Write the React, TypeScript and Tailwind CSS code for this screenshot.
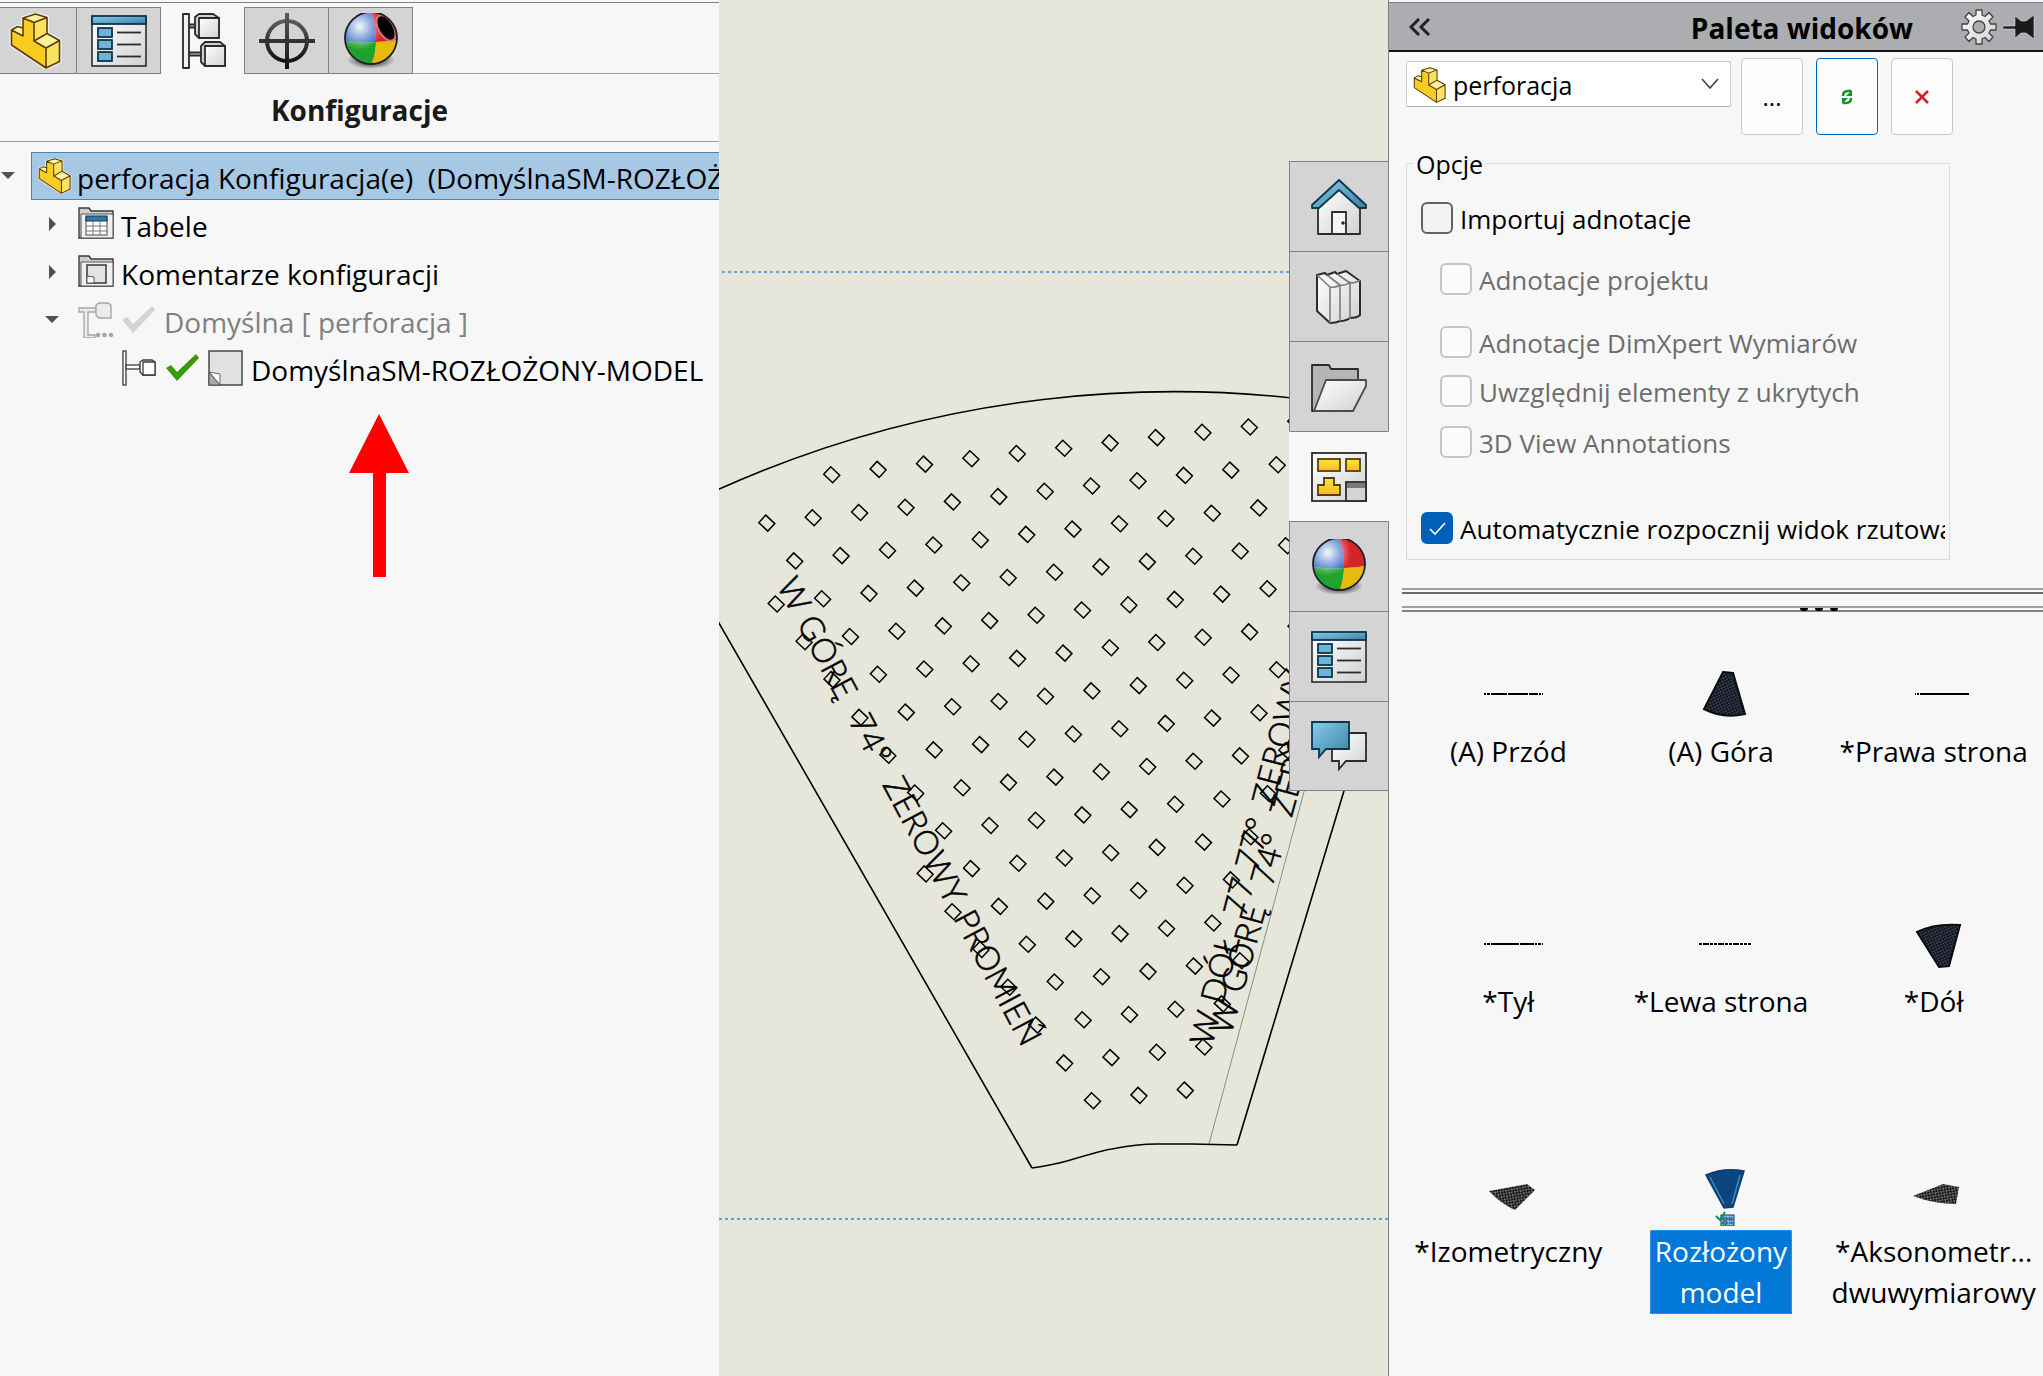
import React, { useState } from 'react';
import clsx from 'clsx';

// ---------------------------------------------------------------- icons

const Gradients: React.FC = () => (
    <svg className="absolute w-0 h-0" aria-hidden="true">
        <defs>
            <linearGradient id="g-blue" x1="0" y1="0" x2="1" y2="1">
                <stop offset="0" stopColor="#86cdee" />
                <stop offset="1" stopColor="#3f7f9f" />
            </linearGradient>
            <linearGradient id="g-grey" x1="0" y1="0" x2="1" y2="1">
                <stop offset="0" stopColor="#ffffff" />
                <stop offset="1" stopColor="#d0d2d2" />
            </linearGradient>
            <linearGradient id="g-dark" x1="0" y1="0" x2="0" y2="1">
                <stop offset="0" stopColor="#5a5a5a" />
                <stop offset="1" stopColor="#111111" />
            </linearGradient>
            <linearGradient id="g-gold" x1="0" y1="0" x2="0" y2="1">
                <stop offset="0" stopColor="#fde24a" />
                <stop offset="1" stopColor="#f3bf14" />
            </linearGradient>
            <radialGradient id="g-shine" cx="0.28" cy="0.28" r="0.45">
                <stop offset="0" stopColor="#ffffff" stopOpacity="0.95" />
                <stop offset="1" stopColor="#ffffff" stopOpacity="0" />
            </radialGradient>
            <radialGradient id="g-shadow">
                <stop offset="0.4" stopColor="#000000" stopOpacity="0.6" />
                <stop offset="1" stopColor="#000000" stopOpacity="0" />
            </radialGradient>
            <pattern id="p-mesh" width="4" height="4" patternUnits="userSpaceOnUse" patternTransform="rotate(20)">
                <rect width="4" height="4" fill="#0d1016" />
                <path d="M1 0v2M3 2v2" stroke="#5d6b86" strokeWidth="1" />
            </pattern>
            <pattern id="p-grain" width="4" height="4" patternUnits="userSpaceOnUse" patternTransform="rotate(35)">
                <rect width="4" height="4" fill="#15161a" />
                <path d="M0 1h2M2 3h1.500" stroke="#c4c4be" strokeWidth="1" />
            </pattern>
            <pattern id="p-bluemesh" width="3" height="3" patternUnits="userSpaceOnUse" patternTransform="rotate(45)">
                <rect width="3" height="3" fill="#0a4a86" />
                <path d="M0 1h3" stroke="#0b3a6a" strokeWidth="1" />
            </pattern>
        </defs>
    </svg>
);

const PartIcon: React.FC<{ className?: string }> = ({ className }) => (
    <svg className={className} viewBox="0 0 56 56" strokeLinejoin="round">
        <path d="M15 5 27.500 1 39 4.500v16l12.500 7v21L38 55 3.500 32V17l6-3.500L15 15z" fill="none" stroke="#fff" strokeOpacity="0.7" strokeWidth="4" />
        <path d="M15 5 27.500 1 39 4.500v16l12.500 7v21L38 55 3.500 32V17l6-3.500L15 15z" fill="#f8cd22" />
        <path d="M15 5 27.500 1 39 4.500 26 9.500zM26 28l13-7.500 12.500 7L38 35zM3.500 17l6-3.500L15 15v8z" fill="#fdf0a0" />
        <path d="M26 9.500l13-5v16L26 28zM38 35l13.500-7.500v21L38 55z" fill="#fae262" />
        <path d="M15 5 27.500 1 39 4.500v16l12.500 7v21L38 55 3.500 32V17l6-3.500L15 15zM15 5l11 4.500 13-5M26 9.500V28l12 7 13.500-7.500M26 28l13-7.500M38 35v20M15 15v8L3.500 17" fill="none" stroke="#5a3d05" strokeWidth="1.600" />
    </svg>
);

const ListIcon: React.FC = () => (
    <svg className="w-14 h-14" viewBox="0 0 56 56">
        <rect x="1" y="4" width="54" height="49" fill="url(#g-grey)" stroke="#2b2b2b" strokeWidth="1.600" />
        <rect x="1" y="3" width="54" height="8" fill="url(#g-blue)" stroke="#0b3650" strokeWidth="1.800" />
        {[15, 27, 39].map(y => (
            <g key={y}>
                <rect x="7" y={y} width="14" height="9" fill="#6db4d8" stroke="#0b3650" strokeWidth="1.800" />
                <path d={`M26 ${y + 4.5}h24`} stroke="#2b2b2b" strokeWidth="1.800" />
            </g>
        ))}
    </svg>
);

const ConfigIcon: React.FC = () => (
    <svg className="w-14 h-14" viewBox="0 0 56 56" stroke="#2b2b2b" strokeWidth="1.800" strokeLinejoin="round">
        <path d="M14 11.500h10v3H14zM14 39.500h14v3H14z" fill="#d8d8d8" />
        <rect x="8" y="1" width="6" height="54" fill="#f2f2f2" />
        <path d="M20 4l4-3h14l6 4v20H24l-4-4z" fill="#cfd1d2" />
        <rect x="24" y="5" width="20" height="20" fill="url(#g-grey)" />
        <path d="M26 33l4-4h15l5 4v20H30l-4-4z" fill="#cfd1d2" />
        <rect x="30" y="33" width="20" height="20" fill="url(#g-grey)" />
    </svg>
);

const TargetIcon: React.FC = () => (
    <svg className="w-14 h-14" viewBox="0 0 56 56" fill="none">
        <circle cx="28" cy="28" r="20" stroke="url(#g-dark)" strokeWidth="4" />
        <rect x="26" y="0" width="4" height="56" fill="url(#g-dark)" />
        <rect x="0" y="26" width="56" height="4" fill="#333" />
    </svg>
);

const BallIcon: React.FC<{ hollow?: boolean }> = ({ hollow }) => (
    <svg className="w-14 h-14" viewBox="0 0 56 56">
        <ellipse cx="28" cy="47" rx="24" ry="9" fill="url(#g-shadow)" />
        <clipPath id="ball-clip"><circle cx="28" cy="25" r="26" /></clipPath>
        <g clipPath="url(#ball-clip)">
            <path d="M0-2h28q5 14 5 31Q14 31 0 27z" fill="#2a62c4" />
            <path d="M28-2q5 14 5 31 14 0 25-3V-2z" fill="#d8222a" />
            <path d="M0 27q14 4 33 2 0 12-6 25H0z" fill="#1fa32c" />
            <path d="M33 29q14 0 25-3v28H27q6-13 6-25z" fill="#e8b90e" />
            <circle cx="28" cy="25" r="26" fill="url(#g-shine)" />
            {hollow && <ellipse cx="43" cy="15" rx="7.500" ry="14" transform="rotate(-30 43 15)" fill="#000" stroke="#e8707a" strokeWidth="2" />}
        </g>
        <circle cx="28" cy="25" r="26" fill="none" stroke="#1d1d2b" strokeWidth="1.800" />
    </svg>
);

const HomeIcon: React.FC = () => (
    <svg className="w-14 h-14" viewBox="0 0 56 56" strokeLinejoin="round">
        <path d="M7 22 28 8l21 14v33H7z" fill="url(#g-grey)" stroke="#2b2b2b" strokeWidth="1.800" />
        <path d="M1 26 28 1l27 25v3h-7L28 11 8 29H1z" fill="url(#g-blue)" stroke="#0b3650" strokeWidth="1.800" />
        <rect x="21" y="33" width="14" height="22" fill="#f4f4f4" stroke="#2b2b2b" strokeWidth="1.800" />
        <circle cx="32" cy="44" r="1.800" fill="#2b2b2b" />
    </svg>
);

const BooksIcon: React.FC = () => (
    <svg className="w-14 h-14" viewBox="0 0 56 56" strokeLinejoin="round">
        <path d="M6 6l8-2 2 2 8-3 2 2 9-3 14 10v34q-3 3-10 3-4 3-10 3-4 2-10 2L6 42z" fill="url(#g-grey)" stroke="#2b2b2b" strokeWidth="2" />
        <path d="M6 6l13 12v36M19 18q6 1 10-2v36M29 16q6 1 10-3v37M39 14q6 0 10-3M16 6l13 10M26 5l13 9" fill="none" stroke="#7c7c7c" strokeWidth="1.600" />
    </svg>
);

const FolderIcon: React.FC = () => (
    <svg className="w-14 h-14" viewBox="0 0 56 56" strokeLinejoin="round">
        <path d="M1 52V6h17l2 4h27v11L42 52z" fill="#b5b5b5" stroke="#2b2b2b" strokeWidth="1.800" />
        <path d="M3 52 15 21h40v6L42 52z" fill="url(#g-grey)" stroke="#4a4a4a" strokeWidth="1.800" />
    </svg>
);

const PaletteIcon: React.FC = () => (
    <svg className="w-14 h-14" viewBox="0 0 56 56">
        <rect x="1" y="4" width="54" height="48" fill="url(#g-grey)" stroke="#2b2b2b" strokeWidth="1.800" />
        <g fill="url(#g-gold)" stroke="#5a3d05" strokeWidth="1.800">
            <rect x="7" y="10" width="22" height="12" />
            <rect x="35" y="10" width="14" height="12" />
            <path d="M7 46V36h6v-7h10v7h6v10z" />
        </g>
        <rect x="35" y="33" width="20" height="19" fill="#d4d4d4" stroke="#2b2b2b" strokeWidth="1.800" />
        <path d="M36 34h18v5H36z" fill="#7a7a7a" />
    </svg>
);

const ChatIcon: React.FC = () => (
    <svg className="w-14 h-14" viewBox="0 0 56 56">
        <path d="M21 15h34v28H35l-7 8v-8h-7z" fill="url(#g-grey)" stroke="#2b2b2b" strokeWidth="1.800" />
        <path d="M1 4h37v27H15l-7 8v-8H1z" fill="url(#g-blue)" stroke="#0b3650" strokeWidth="1.800" />
    </svg>
);

const CheckMark: React.FC<{ color: string }> = ({ color }) => (
    <svg className="w-9 h-9 shrink-0" viewBox="0 0 36 36">
        <path d="M1 18l5-3 6 7L31 4l3 4-22 23z" fill={color} />
    </svg>
);

const TreeFolderIcon: React.FC<{ kind: 'table' | 'note' }> = ({ kind }) => (
    <svg className="w-9 h-9 shrink-0" viewBox="0 0 36 36">
        <path d="M1 32V2h10l2 3h22v27z" fill="#cfcfcf" stroke="#3a3a3a" strokeWidth="1.400" />
        <path d="M3 32V8h32v24z" fill="#f0f0f0" stroke="#555" />
        {kind === 'table' ? (
            <g>
                <rect x="8" y="11" width="21" height="18" fill="#fff" stroke="#4a4a4a" />
                <rect x="8" y="10" width="21" height="5" fill="#2f7aa5" stroke="#0b3650" />
                <path d="M15 15v14M22 15v14M8 20h21M8 25h21" stroke="#777" />
            </g>
        ) : (
            <g>
                <rect x="9" y="11" width="19" height="18" fill="#e2e4e2" stroke="#2b2b2b" strokeWidth="1.400" />
                <path d="M9 22l7 1v6H9z" fill="#fff" stroke="#555" />
            </g>
        )}
    </svg>
);

const ConfigRootIcon: React.FC = () => (
    <svg className="w-9 h-9 shrink-0" viewBox="0 0 36 36" fill="#ececec" stroke="#a5a5a5" strokeWidth="1.300">
        <path d="M1 6h17v4H10v23h7v3H6V10H1z" />
        <path d="M18 3l3-2h9l3 2v13H21l-3-3z" />
        <g fill="#a5a5a5" stroke="none">
            <circle cx="20" cy="33" r="2.300" />
            <circle cx="26.500" cy="33" r="2.300" />
            <circle cx="33" cy="33" r="2.300" />
        </g>
    </svg>
);

const ConfigLeafIcon: React.FC = () => (
    <svg className="w-9 h-9 shrink-0" viewBox="0 0 36 36" fill="#fff" stroke="#3a3a3a" strokeWidth="1.300">
        <rect x="1" y="1" width="3" height="34" />
        <rect x="4" y="15" width="14" height="4" />
        <path d="M18 12l3-2h9l3 2v13H21l-3-3z" />
        <path d="M21 12h12v13H21z" />
    </svg>
);

const SheetIcon: React.FC = () => (
    <svg className="w-9 h-9 shrink-0" viewBox="0 0 36 36">
        <rect x="1" y="1" width="33" height="34" fill="#e0e2df" stroke="#3a3a3a" strokeWidth="1.400" />
        <path d="M1 22l11 2v11z" fill="#fff" stroke="#666" />
        <path d="M1 22v13h11z" fill="#aaa" stroke="#555" />
    </svg>
);

// ---------------------------------------------------------------- configuration tree

const featureTabs = [
    { name: 'Drzewo operacji', width: 'w-[77px] pr-[5px]', icon: <PartIcon className="w-14 h-14" /> },
    { name: 'Właściwości', width: 'w-[84px]', icon: <ListIcon /> },
    { name: 'Konfiguracje', width: 'w-[84px]', icon: <ConfigIcon /> },
    { name: 'DimXpert', width: 'w-[84px]', icon: <TargetIcon /> },
    { name: 'Wyświetlanie', width: 'w-[84px]', icon: <BallIcon hollow /> },
];

const Toggle: React.FC<{ open?: boolean; className?: string }> = ({ open, className }) => (
    <button className={clsx('shrink-0 h-12 flex items-center', className)} aria-label="Rozwiń">
        <svg className="w-[14px] h-[14px]" viewBox="0 0 14 14" fill="#505050">
            {open ? <path d="M0 3h14l-7 7z" /> : <path d="M4 0v14l7-7z" />}
        </svg>
    </button>
);

const ConfigurationPanel: React.FC = () => {
    const [active, setActive] = useState('Konfiguracje');
    const row = 'flex h-12 items-center gap-[7px]';

    return (
        <section className="min-w-0 overflow-hidden bg-[#f7f7f7] pt-[2px]">
            <div className="border-t border-[#808080] pt-1 flex">
                {featureTabs.map(tab => (
                    <button
                        key={tab.name}
                        aria-label={tab.name}
                        onClick={() => setActive(tab.name)}
                        className={clsx(
                            'h-[67px] flex items-center justify-center shrink-0 border-r border-[#808080]',
                            tab.width,
                            tab.name === active ? 'bg-[#f7f7f7]' : 'bg-[#d4d4d4] border-y'
                        )}
                    >
                        {tab.icon}
                    </button>
                ))}
                <div className="flex-1 border-b border-[#a0a0a0]" />
            </div>
            <h1 className="h-[68px] pt-1 flex items-center justify-center border-b border-[#a0a0a0] text-[28px] font-bold text-[#1a1a1a]">
                Konfiguracje
            </h1>
            <div className="mt-[10px] text-[28px] whitespace-nowrap" role="tree">
                <div className="flex h-12" role="treeitem">
                    <Toggle open className="w-[31px] pl-px" />
                    <div className="flex-1 min-w-0 flex items-center gap-1 pl-[5px] bg-[#a6c8e4] border-y border-l border-[#4a86b5] overflow-hidden">
                        <PartIcon className="w-9 h-9 shrink-0" />
                        <span className="pt-[3px] whitespace-pre">perforacja Konfiguracja(e)  (DomyślnaSM-ROZŁOŻONY-MODEL)</span>
                    </div>
                </div>
                <div className={clsx(row, 'pl-[45px]')} role="treeitem">
                    <Toggle className="w-[26px]" />
                    <TreeFolderIcon kind="table" />
                    <span className="pt-[3px]">Tabele</span>
                </div>
                <div className={clsx(row, 'pl-[45px]')} role="treeitem">
                    <Toggle className="w-[26px]" />
                    <TreeFolderIcon kind="note" />
                    <span className="pt-[3px]">Komentarze konfiguracji</span>
                </div>
                <div className={clsx(row, 'pl-[45px] text-[#808080]')} role="treeitem">
                    <Toggle open className="w-[26px]" />
                    <ConfigRootIcon />
                    <CheckMark color="#d4d4d4" />
                    <span className="pt-[3px]">Domyślna [ perforacja ]</span>
                </div>
                <div className={clsx(row, 'pl-[122px]')} role="treeitem">
                    <ConfigLeafIcon />
                    <CheckMark color="#3a9b0a" />
                    <SheetIcon />
                    <span className="pt-[3px]">DomyślnaSM-ROZŁOŻONY-MODEL</span>
                </div>
            </div>
            <svg className="mt-[22px] ml-[349px] w-[60px] h-[163px]" viewBox="0 0 60 163">
                <path d="M30 0l30 59H37v104H24V59H0z" fill="#fe0000" />
            </svg>
        </section>
    );
};

// ---------------------------------------------------------------- drawing

// first and last hole of each row of the perforation
const holeRows = [
    [0, 10], [-2, 9], [-2, 8], [-3, 8], [-3, 7], [-3, 7], [-3, 6], [-3, 5], [-3, 5],
    [-3, 4], [-4, 3], [-4, 2], [-4, 1], [-4, 1], [-4, 0], [-4, -1], [-4, -2],
];

const holes = holeRows.flatMap(([from, to], row) =>
    Array.from({ length: to - from + 1 }, (_, n) => {
        const col = from + n;
        return { x: 831.7 + 46.4 * col + 27.9 * row, y: 474.7 - 5.3 * col + 37.8 * row };
    })
);

const bendNotes = [
    { at: 'translate(776 585) rotate(62)', words: [[0, 'W'], [43, 'GÓRĘ'], [154, '74°'], [226, 'ZEROWY'], [377, 'PROMIEŃ']] },
    { at: 'translate(1231 1036) rotate(-74.5)', words: [[0, 'W'], [43, 'GÓRĘ'], [154, '74°'], [226, 'ZEROWY'], [377, 'PROMIEŃ']] },
    { at: 'translate(1212 1047) rotate(-75.5)', words: [[0, 'W'], [43, 'DÓŁ'], [133, '77'], [181, '77°'], [248, 'ZEROWY'], [399, 'PROMIEŃ']] },
];

const Drawing: React.FC = () => (
    <svg className="absolute inset-0 w-full h-full" viewBox="719 0 669 1376" preserveAspectRatio="xMidYMid slice" fill="none">
        <path d="M722 272h670M719 1219h670" stroke="#5f9fdc" strokeWidth="2" strokeDasharray="3 3" shapeRendering="crispEdges" />
        <path d="M1209 1144 1400 436" stroke="#8c8c84" />
        <g stroke="#000" strokeWidth="1.600">
            <path d="M700 498A1110 1110 0 0 1 1400 415M700 590 1032 1168M1237 1145 1440 473" />
            <path d="M1032 1168q20-3 35-7 40-12 45-12 25-5 45-5h35l45 1" />
        </g>
        <g stroke="#000" strokeWidth="1.500">
            {holes.map(({ x, y }) => (
                <path key={`${x} ${y}`} d={`M${x - 1} ${y - 8}l9 8.500-7 7.500-9-8.500z`} />
            ))}
        </g>
        <g fill="#000" stroke="#000" strokeWidth="0.600" className="font-['Lato',sans-serif] font-light text-[33px]">
            {bendNotes.map(note => (
                <text key={note.at} transform={note.at}>
                    {note.words.map(([x, word]) => <tspan key={x} x={x}>{word}</tspan>)}
                </text>
            ))}
        </g>
    </svg>
);

const taskTabs = [
    { name: 'Zasoby', icon: <HomeIcon /> },
    { name: 'Biblioteka projektu', icon: <BooksIcon /> },
    { name: 'Eksplorator plików', icon: <FolderIcon /> },
    { name: 'Paleta widoków', icon: <PaletteIcon /> },
    { name: 'Wyglądy', icon: <BallIcon /> },
    { name: 'Właściwości niestandardowe', icon: <ListIcon /> },
    { name: 'Forum', icon: <ChatIcon /> },
];

const DrawingArea: React.FC = () => {
    const [active, setActive] = useState('Paleta widoków');

    return (
        <main className="relative min-w-0 bg-[#e6e6da] border-r border-[#808080]">
            <Drawing />
            <nav className="absolute -right-px top-[161px] flex flex-col w-[100px]">
                {taskTabs.map(tab => (
                    <button
                        key={tab.name}
                        aria-label={tab.name}
                        onClick={() => setActive(tab.name)}
                        className={clsx(
                            'h-[90px] flex items-center justify-center border-t border-x last:border-b',
                            tab.name === active
                                ? 'bg-[#f7f7f7] border-x-[#f7f7f7] border-t-[#808080]'
                                : 'bg-[#d4d4d4] border-[#808080]'
                        )}
                    >
                        {tab.icon}
                    </button>
                ))}
            </nav>
        </main>
    );
};

// ---------------------------------------------------------------- view palette

const Option: React.FC<{ label: string; disabled?: boolean; checked?: boolean; className?: string }> = ({ label, disabled, checked, className }) => (
    <label className={clsx('flex items-center gap-[7px] h-8 whitespace-nowrap', disabled && 'text-[#6d6d6d]', className)}>
        <span className="relative w-8 h-8 shrink-0">
            <input
                type="checkbox"
                disabled={disabled}
                defaultChecked={checked}
                className="peer appearance-none block w-8 h-8 rounded-md border-2 border-[#626262] bg-[#f3f3f3] disabled:border-[#c5c5c5] disabled:bg-[#fbfbfb] checked:border-[#005fb8] checked:bg-[#005fb8]"
            />
            <svg className="absolute inset-0 w-8 h-8 pointer-events-none hidden peer-checked:block" viewBox="0 0 32 32">
                <path d="M9 17l5 5 10-11" fill="none" stroke="#fff" strokeWidth="1.600" />
            </svg>
        </span>
        <span className="pt-0.5 overflow-hidden">{label}</span>
    </label>
);

const Edge: React.FC<{ from?: number; to?: number; dash: string }> = ({ from = 3, to = 62, dash }) => (
    <path d={`M${from} 32H${to}`} stroke="#000" strokeWidth="2" strokeDasharray={dash} />
);

const views = [
    { label: '(A) Przód', thumb: <Edge dash="2 1 3 1 16 1 20 1 9 1" /> },
    { label: '(A) Góra', thumb: <path d="M29 10l10 1 12 41q-22 5-41-5z" fill="url(#p-mesh)" stroke="#0a0c12" strokeWidth="2" /> },
    { label: '*Prawa strona', thumb: <Edge from={8} dash="1 1 2 1 60 0" /> },
    { label: '*Tył', thumb: <Edge dash="2 1 3 1 28 1 14 1" /> },
    { label: '*Lewa strona', thumb: <Edge from={5} to={57} dash="3 1 6 1 3 1" /> },
    { label: '*Dół', thumb: <path d="M10 20q18-9 43-7L42 54l-10 1z" fill="url(#p-mesh)" stroke="#0a0c12" strokeWidth="2" /> },
    { label: '*Izometryczny', thumb: <path d="M8 29l38-7 8 6-20 20q-14-6-26-19z" fill="url(#p-grain)" /> },
    {
        label: 'Rozłożony model',
        thumb: (
            <g>
                <path d="M12 13q18-8 38-4L39 45l-9 1z" fill="url(#p-bluemesh)" stroke="#0b3f70" strokeWidth="1.500" />
                <path d="M16 15l14 27M46 13l-8 29" stroke="#3f86c4" strokeWidth="1.500" />
                <rect x="27" y="53" width="13" height="11" fill="#7db4e6" stroke="#0b3a6a" />
                <path d="M29 56h4v2h-4zM35 56h3v2h-3zM29 60h4v2h-4zM35 61h4" fill="#b7d7a8" stroke="#0b3a6a" />
                <path d="M22 54l4 4 5-8" fill="none" stroke="#0f8a5a" strokeWidth="2" />
            </g>
        ),
    },
    { label: '*Aksonometr... dwuwymiarowy', thumb: <path d="M6 34l30-12 16 3-3 17q-22 0-43-8z" fill="url(#p-grain)" /> },
];

const ViewPalette: React.FC = () => {
    const [selected, setSelected] = useState('Rozłożony model');
    const plainButton = 'w-[62px] h-[77px] shrink-0 rounded-[4px] border bg-[#fdfdfd] flex items-center justify-center';

    return (
        <aside className="min-w-0 overflow-hidden bg-[#f7f7f7] pt-[2px]">
            <header className="h-[50px] flex items-center pl-[19px] pr-2 border-t border-t-[#808080] border-b-2 border-b-[#151515] bg-[#abadb0]">
                <button aria-label="Zwiń">
                    <svg className="w-6 h-6" viewBox="0 0 24 24" fill="none" stroke="#222" strokeWidth="3">
                        <path d="M11 4l-8 8 8 8M21 4l-8 8 8 8" />
                    </svg>
                </button>
                <h2 className="flex-1 text-right pt-0.5 pr-12 text-[28px] font-bold">Paleta widoków</h2>
                <button aria-label="Ustawienia">
                    <svg className="w-9 h-9" viewBox="0 0 36 36" fill="url(#g-grey)" stroke="#444" strokeWidth="1.300" strokeLinejoin="round">
                        <path fillRule="evenodd" d="M15 6V1h6v5l3 1.500 4-4 4 4.500-4 4 1.500 3H35v6h-5.500L28 24l4 4-4 4.500-4-4-3 1.500v5h-6v-5l-3-1.500-4 4L4 28l4-4-1.500-3H1v-6h5.500L8 12 4 8l4-4.500 4 4zM18 12a6 6 0 1 0 0 12a6 6 0 1 0 0-12z" />
                    </svg>
                </button>
                <button aria-label="Przypnij" className="ml-1.5">
                    <svg className="w-8 h-6" viewBox="0 0 32 24" fill="#1a1a1a">
                        <path d="M0 11h12V1l6 5h5l8-6v24l-8-6h-5l-6 5V14H0z" stroke="#ddd" strokeWidth="0.600" />
                    </svg>
                </button>
            </header>

            <div className="flex items-start pt-[6px] pl-[17px] pr-[90px] gap-[13px]">
                <div className="relative flex-1 min-w-0 mt-[3px] -mr-[3px]">
                    <select aria-label="Część" className="appearance-none w-full h-[46px] pt-1 pl-[46px] text-[25px] bg-white border border-[#cccccc] border-b-[#b0b0b0] rounded-xs">
                        <option>perforacja</option>
                    </select>
                    <PartIcon className="absolute left-[6px] top-[6px] w-9 h-9 pointer-events-none" />
                    <svg className="absolute right-3 top-[17px] w-[18px] h-[11px] pointer-events-none" viewBox="0 0 18 11" fill="none" stroke="#444" strokeWidth="1.600">
                        <path d="M1 1l8 9 8-9" />
                    </svg>
                </div>
                <button className={clsx(plainButton, 'border-[#c8c8c8] text-2xl')}>...</button>
                <button className={clsx(plainButton, 'border-[#0067c0]')} aria-label="Odśwież">
                    <svg className="w-3 h-4" viewBox="0 0 12 16" fill="none" stroke="#0f9428" strokeWidth="2.500">
                        <path d="M2 7q0-5 5-5h3M10 9q0 5-5 5H2" />
                        <path d="M11 1v6H5zM1 15V9h6z" fill="#0f9428" stroke="none" />
                    </svg>
                </button>
                <button className={clsx(plainButton, 'border-[#c8c8c8]')} aria-label="Wyczyść">
                    <svg className="w-[14px] h-[14px]" viewBox="0 0 14 14" stroke="#d01f26" strokeWidth="2.500">
                        <path d="M1 1l12 12M13 1L1 13" />
                    </svg>
                </button>
            </div>

            <fieldset className="mt-[12px] ml-[17px] mr-[93px] h-[413px] border border-[#dcdcdc] pl-[14px] pr-1 text-[26px] min-w-0">
                <legend className="-ml-[7px] px-[2px] h-8 text-[25px] leading-[34px]">Opcje</legend>
                <div className="pt-[23px]">
                    <Option label="Importuj adnotacje" />
                    <Option label="Adnotacje projektu" disabled className="ml-[19px] mt-[29px]" />
                    <Option label="Adnotacje DimXpert Wymiarów" disabled className="ml-[19px] mt-[31px]" />
                    <Option label="Uwzględnij elementy z ukrytych" disabled className="ml-[19px] mt-[17px]" />
                    <Option label="3D View Annotations" disabled className="ml-[19px] mt-[19px]" />
                    <Option label="Automatycznie rozpocznij widok rzutowania" checked className="mt-[54px]" />
                </div>
            </fieldset>

            <div className="ml-[13px] mt-[28px]" role="separator">
                <div className="h-[6px] border-y-2 border-t-[#a0a0a0] border-b-[#696969]" />
                <div className="mt-[12px] h-[6px] pl-[193px] border-y-2 border-t-[#a0a0a0] border-b-[#808080] flex justify-center gap-[7px]">
                    <span className="w-2 h-[3px] rounded-b-full bg-black" />
                    <span className="w-2 h-[3px] rounded-b-full bg-black" />
                    <span className="w-2 h-[3px] rounded-b-full bg-black" />
                </div>
            </div>

            <div className="pt-[50px] pl-[13px] pr-[3px] grid grid-cols-3 auto-rows-[170px] gap-y-20">
                {views.map(view => (
                    <button key={view.label} onClick={() => setSelected(view.label)} className="min-w-0 flex flex-col items-center">
                        <svg className="w-16 h-16 ml-[10px] shrink-0" viewBox="0 0 64 64" fill="none">{view.thumb}</svg>
                        <span
                            className={clsx(
                                'mt-1 px-1 border border-dotted text-[28px] leading-[41px]',
                                view.label === selected ? 'w-min bg-[#0078d7] text-white border-[#c98a3a]' : 'border-transparent'
                            )}
                        >
                            {view.label}
                        </span>
                    </button>
                ))}
            </div>
        </aside>
    );
};

const App: React.FC = () => (
    <div className="relative grid grid-cols-[719fr_670fr_654fr] min-h-screen overflow-hidden bg-[#f7f7f7] text-black font-['Open_Sans','Noto_Sans',sans-serif]">
        <Gradients />
        <ConfigurationPanel />
        <DrawingArea />
        <ViewPalette />
    </div>
);

export default App;
